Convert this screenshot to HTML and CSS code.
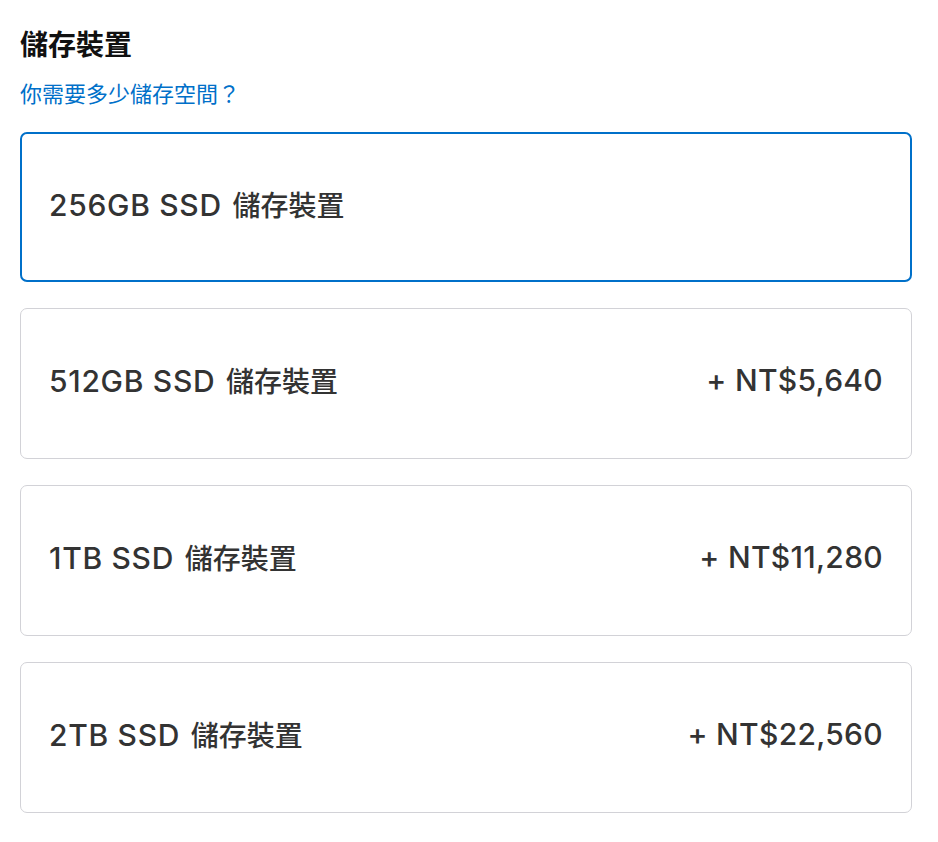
FILE: index.html
```html
<!DOCTYPE html>
<html lang="zh-Hant">
<head>
    <meta charset="UTF-8">
    <meta name="viewport" content="width=device-width, initial-scale=1.0">
    <title>儲存裝置</title>
    <link rel="stylesheet" href="styles.css">
</head>
<body>
    <div class="storage">
        <h2 class="storage-title">儲存裝置</h2>
        <a class="storage-help" href="#">你需要多少儲存空間？</a>

        <div class="options">
            <label class="option selected">
                <span class="option-name">256GB SSD <span class="cjk">儲存裝置</span></span>
            </label>
            <label class="option">
                <span class="option-name">512GB SSD <span class="cjk">儲存裝置</span></span>
                <span class="option-price">+ NT$5,640</span>
            </label>
            <label class="option">
                <span class="option-name">1TB SSD <span class="cjk">儲存裝置</span></span>
                <span class="option-price">+ NT$11,280</span>
            </label>
            <label class="option">
                <span class="option-name">2TB SSD <span class="cjk">儲存裝置</span></span>
                <span class="option-price">+ NT$22,560</span>
            </label>
        </div>
    </div>
</body>
</html>
```

FILE: styles.css
```css
body {
    margin: 0;
    background: #fff;
    font-family: Inter, "Liberation Sans", "Noto Sans CJK TC", sans-serif;
    color: #1d1d1f;
}

.storage {
    padding: 25px 26px 30px 20px;
}

.storage-title {
    margin: 0;
    font-family: "Noto Sans CJK TC", sans-serif;
    font-size: 28px;
    line-height: 36px;
    font-weight: 700;
    color: #111;
}

.storage-help {
    display: inline-block;
    margin-top: 16px;
    font-family: "Noto Sans CJK TC", sans-serif;
    font-size: 22px;
    line-height: 30px;
    color: #0070c9;
    text-decoration: none;
}

.options {
    margin-top: 25px;
    display: flex;
    flex-direction: column;
    gap: 26px;
}

.option {
    box-sizing: border-box;
    height: 151px;
    display: flex;
    align-items: center;
    justify-content: space-between;
    padding: 0 28px 7px 28px;
    border: 1px solid #d2d2d7;
    border-radius: 7px;
    font-size: 30px;
    font-weight: 500;
    letter-spacing: 0.7px;
    color: #333;
    cursor: pointer;
}

.option.selected {
    height: 150px;
    border: 2px solid #0070c9;
    padding-left: 27px;
}

.cjk {
    margin-left: 2px;
    font-family: "Noto Sans CJK TC", sans-serif;
    font-size: 28px;
    font-weight: 500;
    letter-spacing: 0;
}

.option-price {
    letter-spacing: 0.3px;
}
```
